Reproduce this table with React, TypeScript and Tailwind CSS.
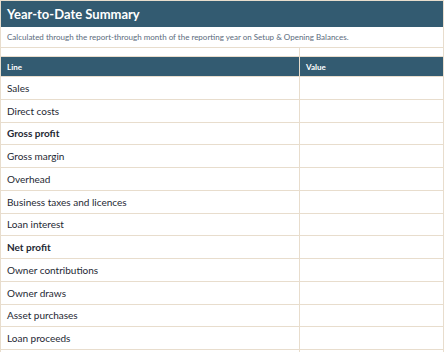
import React from "react";

const rows: { label: string; bold?: boolean }[] = [
  { label: "Sales" },
  { label: "Direct costs" },
  { label: "Gross profit", bold: true },
  { label: "Gross margin" },
  { label: "Overhead" },
  { label: "Business taxes and licences" },
  { label: "Loan interest" },
  { label: "Net profit", bold: true },
  { label: "Owner contributions" },
  { label: "Owner draws" },
  { label: "Asset purchases" },
  { label: "Loan proceeds" },
  { label: "" },
];

export default function App() {
  return (
    <div className="w-[445px] h-[352px] overflow-hidden bg-white font-['Lato','Liberation_Sans',sans-serif]">
      <div className="w-[444px] border-l border-r border-t border-[#e8ddcd]">
        <div className="h-[26px] bg-[#335b71] flex items-center px-[6px]">
          <span className="text-white font-bold text-[13px] leading-none">Year-to-Date Summary</span>
        </div>
        <div className="h-[21px] border-b border-[#e8ddcd] flex items-center px-[6px]">
          <span className="text-[#5b6b7c] text-[8px] leading-none">
            Calculated through the report-through month of the reporting year on Setup &amp; Opening Balances.
          </span>
        </div>
        <div className="h-[9px] border-b border-[#e8ddcd] grid grid-cols-[298px_1fr]">
          <div />
          <div className="border-l border-[#e8ddcd]" />
        </div>
        <div className="h-[20px] border-b border-[#e8ddcd] bg-[#335b71] grid grid-cols-[298px_1fr]">
          <div className="flex items-center px-[6px] text-white font-bold text-[8px] leading-none">Line</div>
          <div className="flex items-center px-[6px] border-l border-[#e8ddcd] text-white font-bold text-[8px] leading-none">Value</div>
        </div>
        {rows.map((r, i) => (
          <div key={i} className="h-[22.75px] border-b border-[#e8ddcd] grid grid-cols-[298px_1fr]">
            <div
              className={`flex items-center px-[6px] text-[10px] leading-none text-[#1e2833] ${
                r.bold ? "font-bold" : ""
              }`}
            >
              {r.label}
            </div>
            <div className="border-l border-[#e8ddcd]" />
          </div>
        ))}
      </div>
    </div>
  );
}
